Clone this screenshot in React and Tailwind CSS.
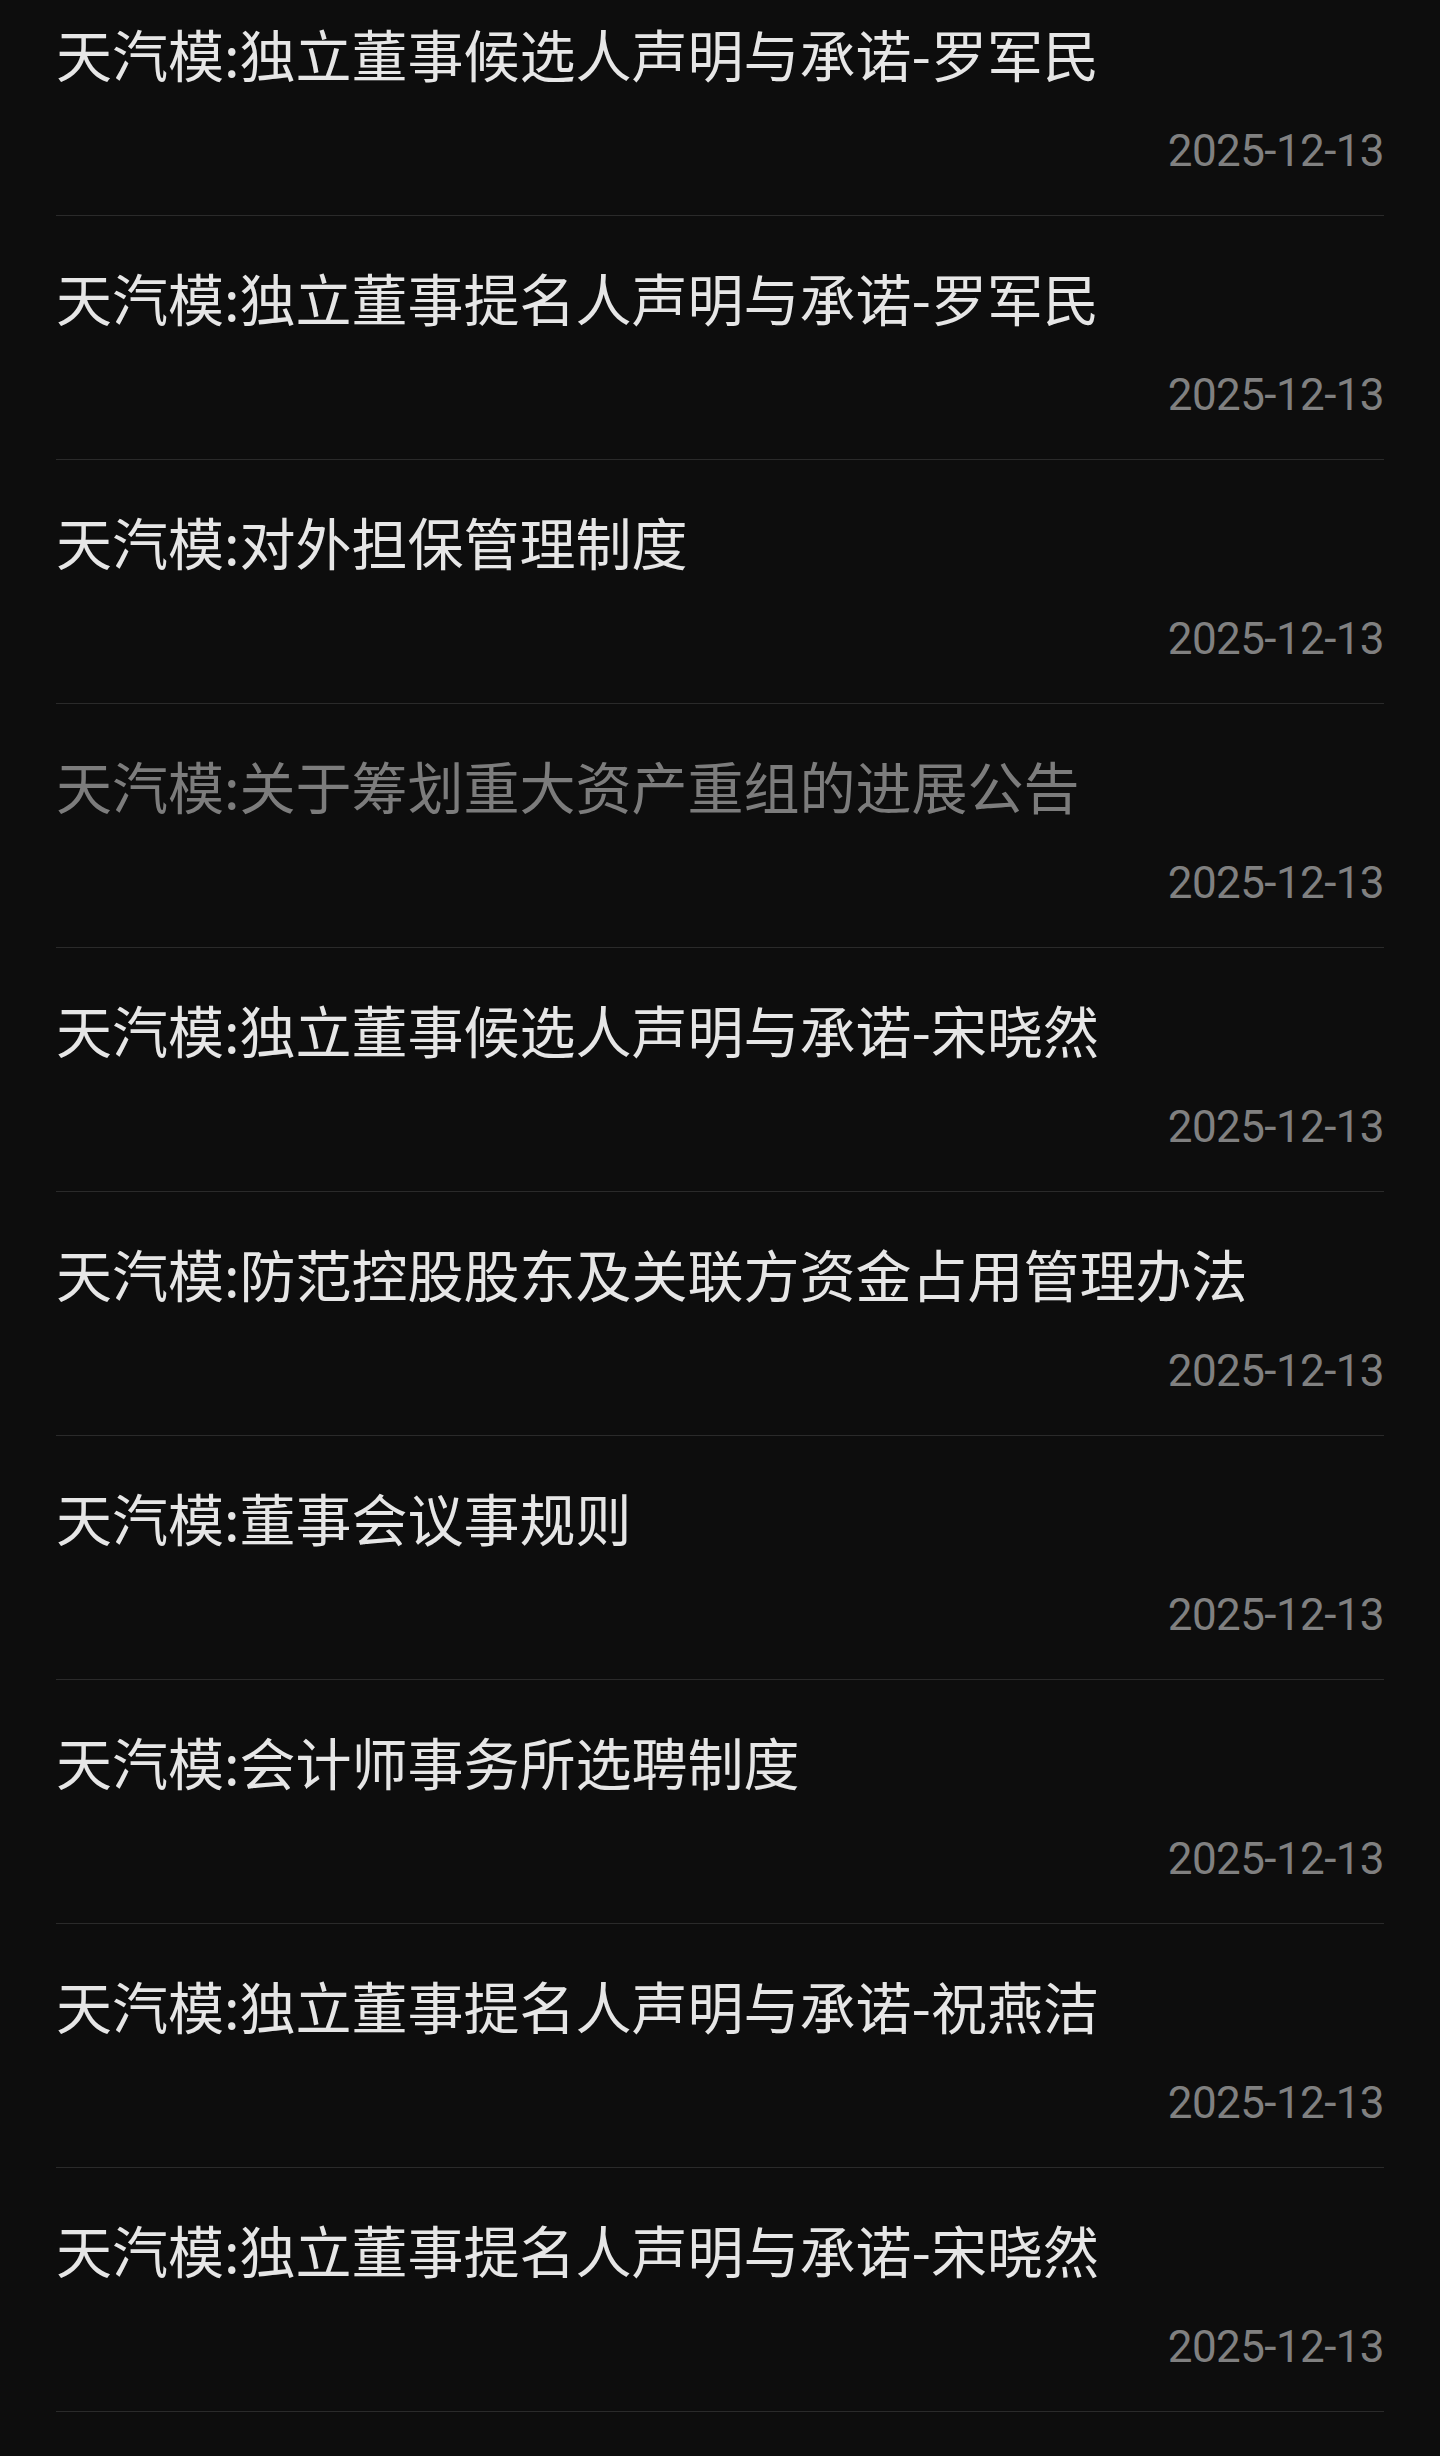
const items = [
  { title: "天汽模:独立董事候选人声明与承诺-罗军民", date: "2025-12-13" },
  { title: "天汽模:独立董事提名人声明与承诺-罗军民", date: "2025-12-13" },
  { title: "天汽模:对外担保管理制度", date: "2025-12-13" },
  { title: "天汽模:关于筹划重大资产重组的进展公告", date: "2025-12-13", read: true },
  { title: "天汽模:独立董事候选人声明与承诺-宋晓然", date: "2025-12-13" },
  { title: "天汽模:防范控股股东及关联方资金占用管理办法", date: "2025-12-13" },
  { title: "天汽模:董事会议事规则", date: "2025-12-13" },
  { title: "天汽模:会计师事务所选聘制度", date: "2025-12-13" },
  { title: "天汽模:独立董事提名人声明与承诺-祝燕洁", date: "2025-12-13" },
  { title: "天汽模:独立董事提名人声明与承诺-宋晓然", date: "2025-12-13" },
];

const NoticeRow = ({ item }) => (
  <div className="border-b border-[#2a2a2a] pt-[49px] pb-[40px]">
    <div
      className={
        "text-[56px] leading-[64px] whitespace-nowrap " +
        (item.read ? "text-[#7c7c7c]" : "text-[#e6e6e6]")
      }
      style={{ fontFamily: '"Noto Sans CJK SC", "Noto Sans", sans-serif' }}
    >
      {item.title}
    </div>
    <div
      className="mt-[42px] text-right text-[44px] leading-[48px] tracking-[-0.6px] text-[#808080]"
      style={{ fontFamily: 'Roboto, "Noto Sans", sans-serif' }}
    >
      {item.date}
    </div>
  </div>
);

export default function App() {
  return (
    <div className="bg-[#0d0d0d] h-[2456px] w-full overflow-hidden">
      <div className="px-[56px] -mt-[28px]">
        {items.map((item, i) => (
          <NoticeRow key={i} item={item} />
        ))}
      </div>
    </div>
  );
}
